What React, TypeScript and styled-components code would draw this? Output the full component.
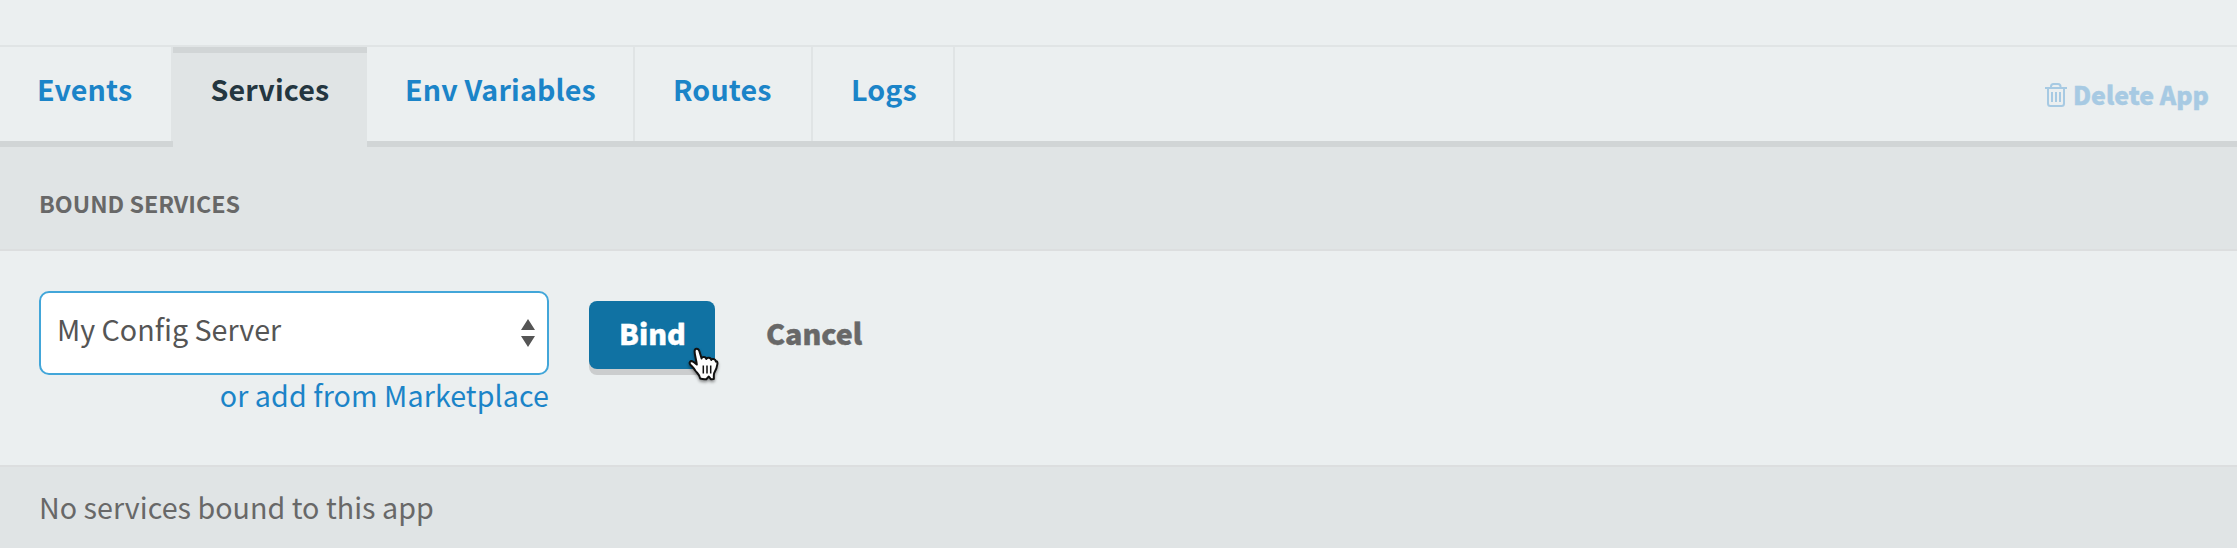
import React from "react";
import styled, { createGlobalStyle } from "styled-components";

const GlobalStyle = createGlobalStyle`
  * { box-sizing: border-box; }
  body {
    margin: 0;
    background: #ebeff0;
    font-family: "Noto Sans CJK SC", "Open Sans", sans-serif;
    font-size: 28.65px;
    color: #686868;
  }
`;

const Page = styled.main`
  height: 548px;
  display: flex;
  flex-direction: column;
  overflow: hidden;
`;

const TabBar = styled.nav`
  display: flex;
  height: 102px;
  margin-top: 45px;
  border-top: 2px solid #e0e4e5;
`;

const TabCell = styled.div<{ $active?: boolean }>`
  display: flex;
  border-bottom: 6px solid ${(p) => (p.$active ? "#e0e4e5" : "#d1d5d6")};
`;

const Tab = styled.a<{ $active?: boolean; $width: number }>`
  display: block;
  width: ${(p) => p.$width}px;
  padding: ${(p) => (p.$active ? "2px 0 0 37.5px" : "8px 0 0 38px")};
  border: 0 solid #e0e4e5;
  border-right-width: ${(p) => (p.$active ? 0 : 2)}px;
  border-top: ${(p) => (p.$active ? "6px solid #d1d5d6" : "0")};
  background: ${(p) => (p.$active ? "#e0e4e5" : "transparent")};
  color: ${(p) => (p.$active ? "#243640" : "#1b84c8")};
  font-weight: 700;
  letter-spacing: 0.14px;
  line-height: 67px;
  white-space: nowrap;

  ${TabCell}:first-child & {
    padding-left: 37px;
  }
`;

const TabActions = styled.div`
  flex: 1;
  display: flex;
  justify-content: flex-end;
  align-items: flex-start;
  padding: 32px 28px 0 0;
  border-bottom: 6px solid #d1d5d6;
`;

const DeleteButton = styled.a`
  display: flex;
  gap: 6px;
  color: #a7cae3;
  font-size: 24.9px;
  font-weight: 900;
  -webkit-text-stroke: 0.4px currentColor;
  line-height: 30px;
  white-space: nowrap;

  svg {
    margin-top: 4px;
  }
`;

const SectionHeader = styled.header`
  height: 104px;
  padding: 36px 39px 0;
  background: #e0e4e5;
  border-bottom: 2px solid #dcdedf;
`;

const SectionTitle = styled.h2`
  margin: 0;
  font-size: 23.25px;
  font-weight: 700;
  line-height: 40px;
`;

const BindForm = styled.section`
  display: flex;
  height: 214px;
  padding: 40px 39px 0;
`;

const Picker = styled.div`
  width: 510px;
  margin-right: 40px;
`;

const Select = styled.div`
  display: flex;
  justify-content: space-between;
  height: 84px;
  padding: 16px 12px 0 16px;
  border: 2px solid #42a6d9;
  border-radius: 10px;
  background: #fff;
  color: #555;
  line-height: 40px;

  svg {
    margin-top: 10px;
  }
`;

const MarketLink = styled.a`
  display: block;
  color: #1b84c8;
  letter-spacing: 0.09px;
  line-height: 40px;
  text-align: right;
  white-space: nowrap;
`;

const BindButton = styled.button`
  position: relative;
  width: 126px;
  height: 68px;
  margin-top: 10px;
  padding: 0 0 4px 1px;
  border: 0;
  border-radius: 8px;
  background: #1072a3;
  box-shadow: 0 6px 0 #cbcdce;
  color: #fff;
  font: inherit;
  font-weight: 900;
  -webkit-text-stroke: 0.4px currentColor;
  line-height: 64px;
`;

const Pointer = styled.svg`
  position: absolute;
  left: 97px;
  top: 44px;
  overflow: visible;
  filter: drop-shadow(0 2px 1.5px rgba(0, 0, 0, 0.4));
`;

const CancelButton = styled.button`
  height: 68px;
  margin: 10px 0 0 51px;
  padding: 0 0 4px;
  border: 0;
  background: none;
  color: #686868;
  font: inherit;
  font-weight: 900;
  -webkit-text-stroke: 0.4px currentColor;
  line-height: 64px;
`;

const EmptyMessage = styled.p`
  flex: 1;
  margin: 0;
  padding: 20px 39px 0;
  border-top: 2px solid #dcdedf;
  background: #e0e4e5;
  letter-spacing: 0.03px;
  line-height: 40px;
`;

const tabs = [
  { label: "Events", width: 173 },
  { label: "Services", width: 194, active: true },
  { label: "Env Variables", width: 268 },
  { label: "Routes", width: 178 },
  { label: "Logs", width: 142 },
];

const TrashIcon = () => (
  <svg width="22" height="24" viewBox="0 0 22 24" fill="none" stroke="currentColor" strokeWidth="2">
    <path d="M0 5H22M3 5V20.5Q3 23 5.500 23H16.500Q19 23 19 20.500V5M6 5V3.500Q6 1 8.500 1H13Q15.500 1 15.500 3.500V5M7 9V19M11 9V19M15 9V19" />
  </svg>
);

const SortArrows = () => (
  <svg width="14" height="28" viewBox="0 0 14 28" fill="currentColor">
    <path d="M7 0L14 11H0ZM7 28L14 17H0Z" />
  </svg>
);

const HandPointer = () => (
  <Pointer width="34" height="36" viewBox="0 0 34 36">
    <path
      d="M14.200 33.500C14 30 11.500 28.500 9.200 25.500C7.500 22.500 6 21.500 4.200 19.500C2.800 17.500 4.200 15.800 6.200 16.200C8 16.700 9.300 18.200 10.800 19.500C10.300 15 8.700 10.500 8.600 6.500C8.500 3 12.300 2.700 13.300 6L15.600 13.500C15.600 11.300 19.800 11.300 20.300 14C20.600 12 25 12.200 25.300 15C25.800 13 29.500 14 29.900 16.500C30.600 15.600 31.700 17 31.400 19C31 22.500 30 25 28.200 28C27.500 30 28 32 27.800 34L24.800 34.200L22.800 31.500L20.300 34.200Q17 34.500 14.200 33.500Z"
      fill="#fff"
      stroke="#111"
      strokeWidth="2"
      strokeLinejoin="round"
    />
    <path d="M17.300 20.500V28.500M21 20.500V28.500M24.700 20.500V28.500" stroke="#111" strokeWidth="1.500" />
  </Pointer>
);

export default function App() {
  return (
    <Page>
      <GlobalStyle />
      <TabBar>
        {tabs.map((t) => (
          <TabCell key={t.label} $active={t.active}>
            <Tab $width={t.width} $active={t.active}>{t.label}</Tab>
          </TabCell>
        ))}
        <TabActions>
          <DeleteButton>
            <TrashIcon />
            Delete App
          </DeleteButton>
        </TabActions>
      </TabBar>
      <SectionHeader>
        <SectionTitle>BOUND SERVICES</SectionTitle>
      </SectionHeader>
      <BindForm>
        <Picker>
          <Select>
            My Config Server
            <SortArrows />
          </Select>
          <MarketLink>or add from Marketplace</MarketLink>
        </Picker>
        <BindButton>
          Bind
          <HandPointer />
        </BindButton>
        <CancelButton>Cancel</CancelButton>
      </BindForm>
      <EmptyMessage>No services bound to this app</EmptyMessage>
    </Page>
  );
}
